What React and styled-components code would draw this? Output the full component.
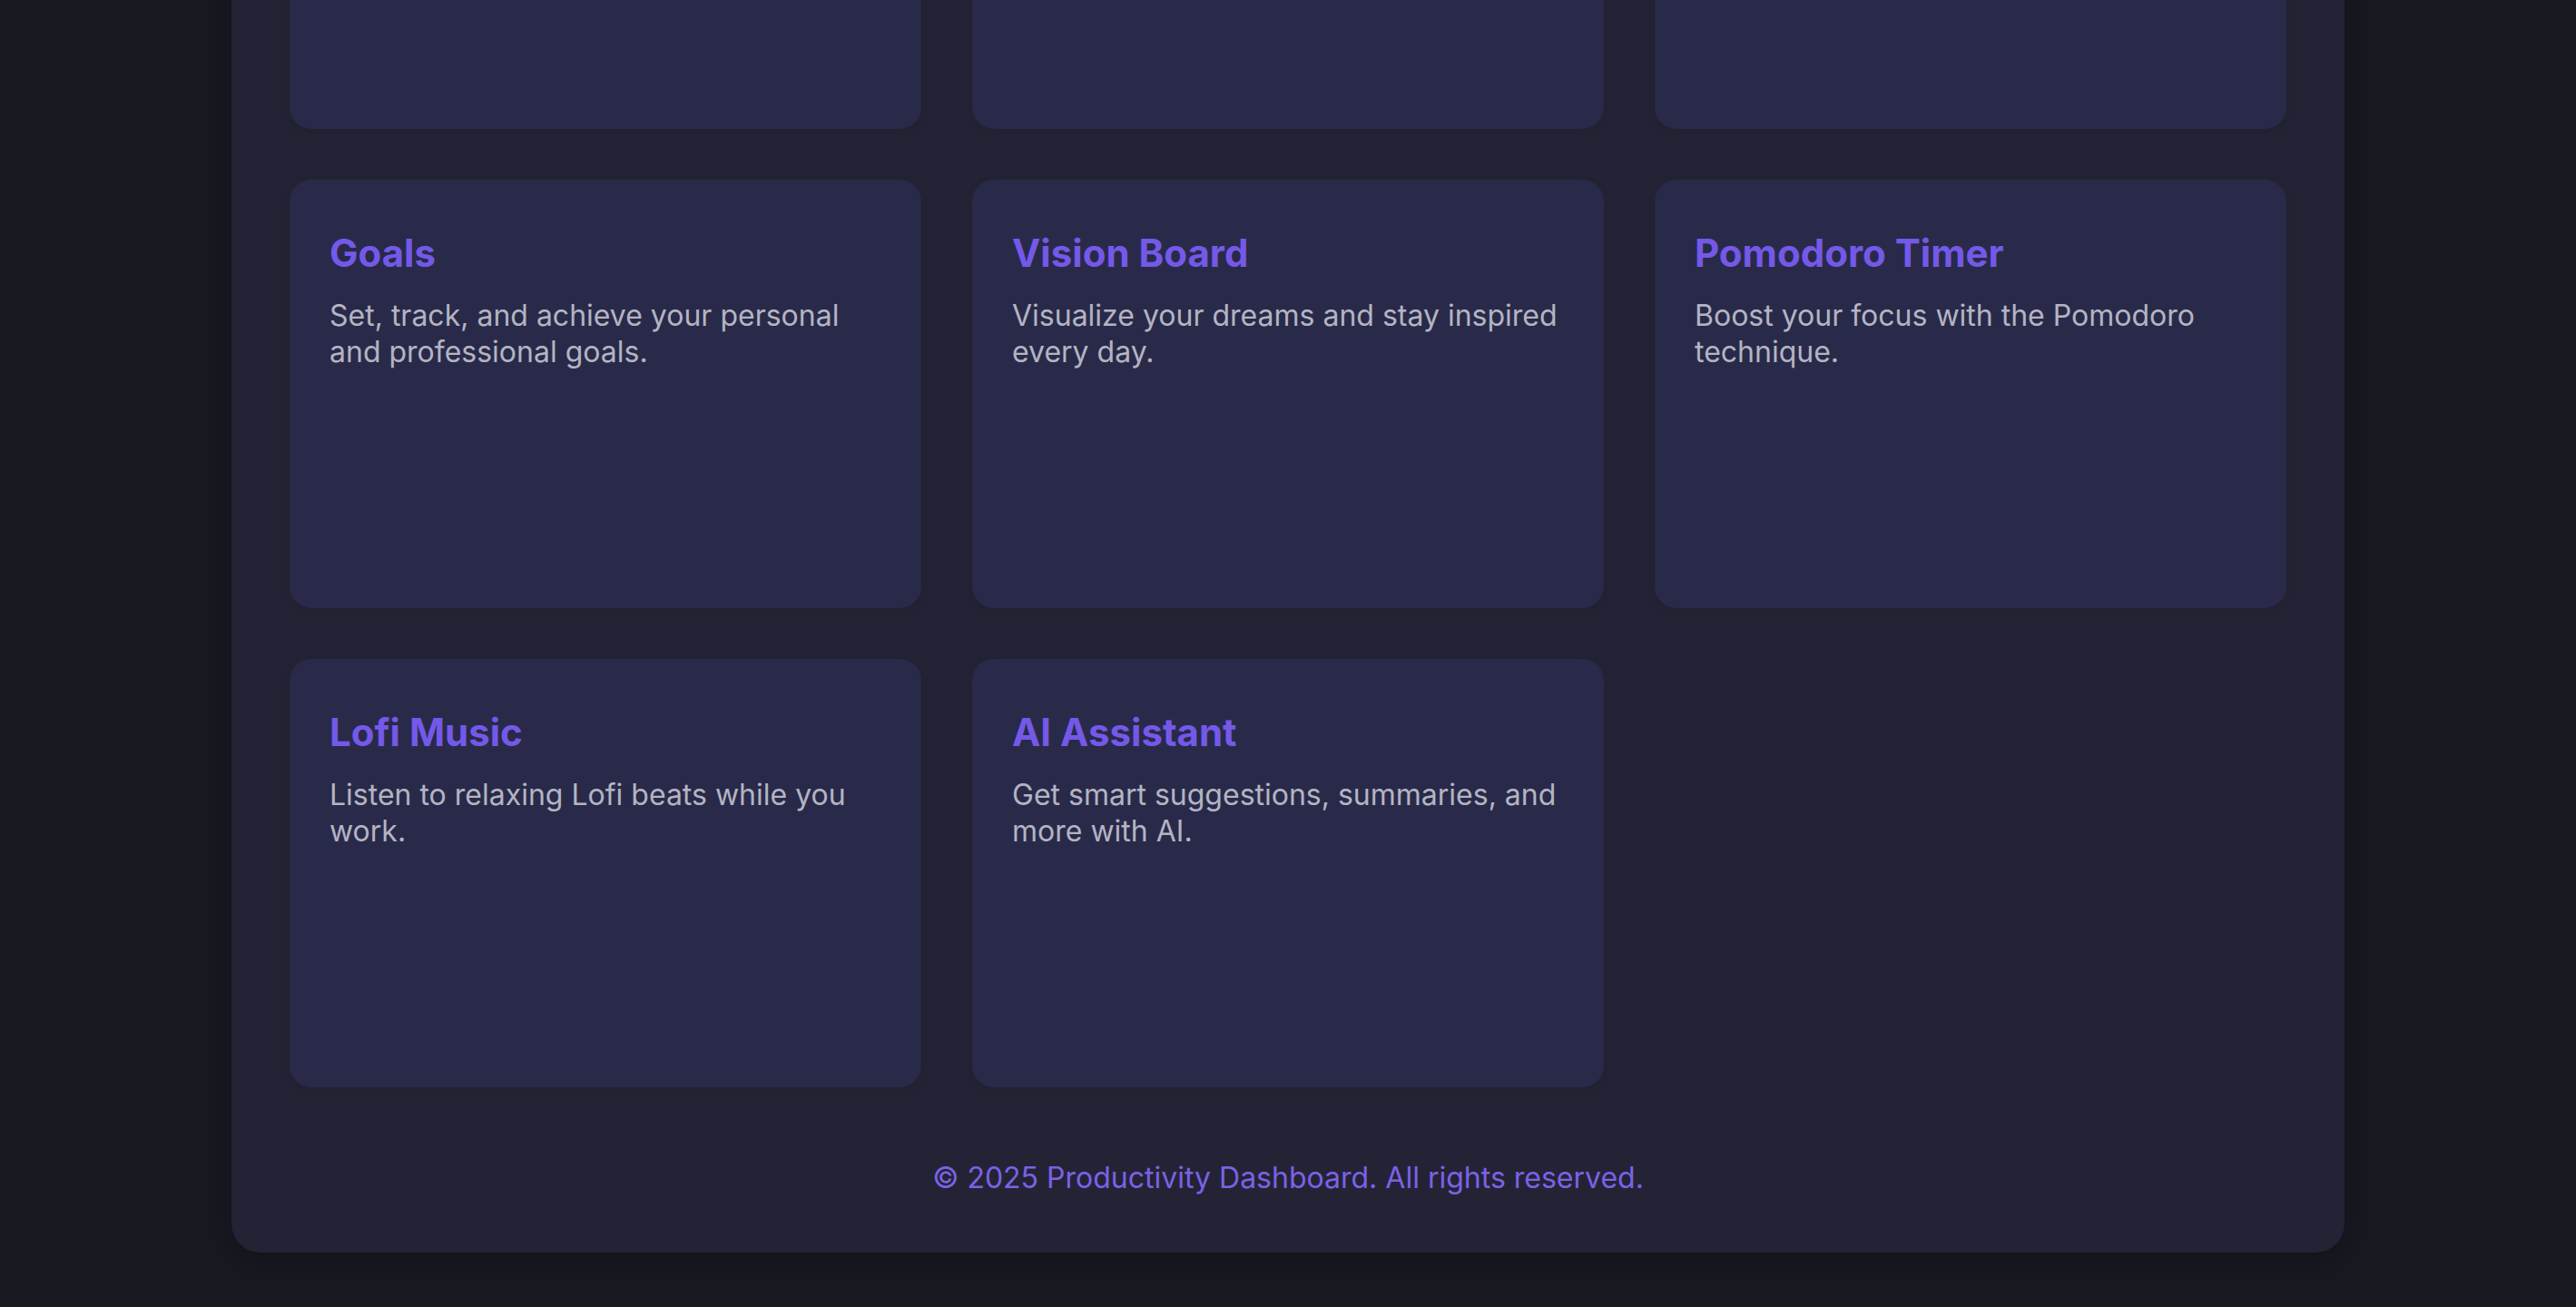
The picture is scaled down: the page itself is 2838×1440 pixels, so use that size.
import React from 'react'
import styled, { createGlobalStyle } from 'styled-components'

const GlobalStyle = createGlobalStyle`
    html, body {
        margin: 0;
        padding: 0;
        background: #191922;
        font-family: Inter, "Noto Sans", "Liberation Sans", sans-serif;
    }
    * { box-sizing: border-box; }
`

// the page is shown scrolled to the bottom, so the view is pinned to its end
const Viewport = styled.div`
    height: 100vh;
    overflow: hidden;
    display: flex;
    flex-direction: column;
    justify-content: flex-end;
    padding-bottom: 60px;
`

const Container = styled.main`
    width: 2328px;
    margin: 0 auto;
    flex-shrink: 0;
    padding: 64px 64px 59px;
    background: #242335;
    border-radius: 32px;
    box-shadow: 0 10px 40px rgba(0, 0, 0, 0.28);
`

const PageTitle = styled.h1`
    margin: 0 0 56px;
    font-size: 56px;
    font-weight: 700;
    color: #7459e8;
    text-align: center;
`

const Grid = styled.section`
    display: grid;
    grid-template-columns: repeat(3, 1fr);
    gap: 56px;
`

const Card = styled.article`
    min-height: 472px;
    padding: 56px 44px 44px;
    background: #292a4a;
    border-radius: 24px;
    box-shadow: 0 4px 14px rgba(0, 0, 0, 0.08);
`

const CardTitle = styled.h3`
    margin: 0 0 24px;
    font-size: 42px;
    line-height: 50px;
    font-weight: 700;
    color: #7459e8;
`

const CardText = styled.p`
    margin: 0;
    font-size: 32px;
    line-height: 40px;
    color: #b4b4c2;
`

const Footer = styled.footer`
    margin-top: 77px;
    font-size: 32px;
    line-height: 46px;
    text-align: center;
    color: #7a62e6;
`

const features = [
    { title: 'To-Do List', text: 'Organize your tasks and get things done.' },
    { title: 'Notes', text: 'Capture ideas and keep your thoughts in one place.' },
    { title: 'Calendar', text: 'Plan your days and never miss an event.' },
    { title: 'Goals', text: 'Set, track, and achieve your personal and professional goals.' },
    { title: 'Vision Board', text: 'Visualize your dreams and stay inspired every day.' },
    { title: 'Pomodoro Timer', text: 'Boost your focus with the Pomodoro technique.' },
    { title: 'Lofi Music', text: 'Listen to relaxing Lofi beats while you work.' },
    { title: 'AI Assistant', text: 'Get smart suggestions, summaries, and more with AI.' }
]

const FeatureCard = ({ title, text }) => (
    <Card>
        <CardTitle>{title}</CardTitle>
        <CardText>{text}</CardText>
    </Card>
)

export default function App() {
    return (
        <Viewport>
            <GlobalStyle />
            <Container>
                <PageTitle>Productivity Dashboard</PageTitle>
                <Grid>
                    {features.map(f => <FeatureCard key={f.title} {...f} />)}
                </Grid>
                <Footer>© 2025 Productivity Dashboard. All rights reserved.</Footer>
            </Container>
        </Viewport>
    )
}
